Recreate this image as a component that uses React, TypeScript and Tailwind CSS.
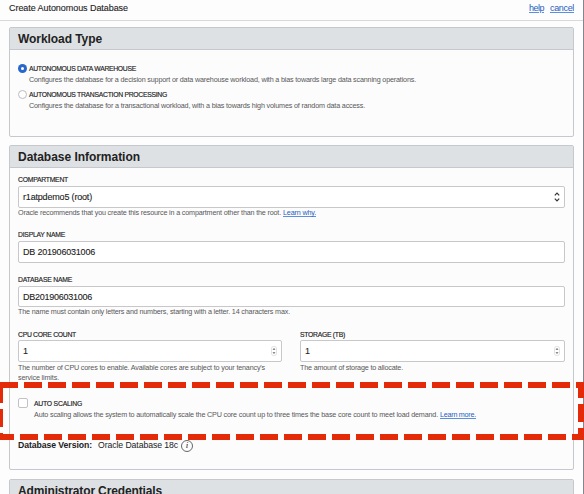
import { useLayoutEffect, useRef, type ReactNode } from "react";

/* A single line of text whose tracking is adjusted so that it spans `w` pixels. */
function Line({ w, children, className = "" }: { w: number; children: string; className?: string }) {
  const ref = useRef<HTMLSpanElement>(null);
  useLayoutEffect(() => {
    const el = ref.current;
    if (!el) return;
    el.style.letterSpacing = "0px";
    const natural = el.getBoundingClientRect().width;
    el.style.letterSpacing = `${(w - natural) / children.length}px`;
  }, [w, children]);
  return (
    <span ref={ref} className={`inline-block shrink-0 whitespace-nowrap ${className}`}>
      {children}
    </span>
  );
}

function Link({ w, children }: { w: number; children: string }) {
  return (
    <a href="#" className="block text-[#2560c4]">
      <Line w={w} className="underline decoration-[#5d8fdc] decoration-1 underline-offset-1">{children}</Line>
    </a>
  );
}

function Panel({ title, w, className, children }: { title: string; w: number; className: string; children?: ReactNode }) {
  return (
    <section className={`mx-[9px] w-[565px] shrink-0 rounded-[2px] border border-[#c5c9cd] bg-[#fcfcfd] ${className}`}>
      <h2 className="h-[22px] border-b border-[#c5c9cd] bg-[#dee1e4] pl-[8px] text-[12px] leading-[22px] font-bold text-[#222]">
        <Line w={w}>{title}</Line>
      </h2>
      {children}
    </section>
  );
}

function Label({ w, children }: { w: number; children: string }) {
  return (
    <div className="h-[10px] text-[6.8px] leading-[10px] text-[#222] [-webkit-text-stroke:0.15px_#222]">
      <Line w={w}>{children}</Line>
    </div>
  );
}

function Help({ children, className = "flex" }: { children: ReactNode; className?: string }) {
  return <div className={`gap-x-[2px] text-[7.2px] leading-[10px] text-[#585858] ${className}`}>{children}</div>;
}

function Field({ value, w, className = "h-[22px]", children }: { value: string; w: number; className?: string; children?: ReactNode }) {
  return (
    <div className={`flex items-center justify-between rounded-[2px] border border-[#c8c8ca] bg-white pl-[4px] text-[9px] leading-[20px] text-[#222] [-webkit-text-stroke:0.1px_#222] ${className}`}>
      <Line w={w}>{value}</Line>
      {children}
    </div>
  );
}

function Stepper() {
  return (
    <svg width="6" height="10" viewBox="0 0 6 10" className="mr-[4px]">
      <rect x="0.5" y="0.5" width="5" height="9" rx="2" fill="#fff" stroke="#d6d6d6" strokeWidth="0.7" />
      <path d="M1.5 3.8 3 2.1 4.5 3.8zM1.5 6.2 3 7.9 4.5 6.2z" fill="#666" />
    </svg>
  );
}

function SelectArrows() {
  return (
    <svg width="6" height="10" viewBox="0 0 6 10" fill="none" stroke="#333" strokeWidth="1.2" className="mr-[4px]">
      <path d="M0.8 3.4 3 1.2 5.2 3.4M0.8 6.6 3 8.8 5.2 6.6" />
    </svg>
  );
}

function Option({ label, lw, help, hw, checked }: { label: string; lw: number; help: string; hw: number; checked?: boolean }) {
  return (
    <div className="flex h-[26px] gap-[2px]">
      {checked ? (
        <span className="flex size-[9px] shrink-0 items-center justify-center rounded-full bg-[#2868cc]">
          <span className="size-[3px] rounded-full bg-white" />
        </span>
      ) : (
        <span className="size-[9px] shrink-0 rounded-full border border-[#bdbdc0] bg-white" />
      )}
      <div>
        <Label w={lw}>{label}</Label>
        <Help className="mt-[1px] flex">
          <Line w={hw}>{help}</Line>
        </Help>
      </div>
    </div>
  );
}

export default function App() {
  return (
    <div className="relative h-[494px] w-[584px] overflow-hidden font-['Liberation_Sans',Arial,sans-serif]">
      <main className="flex h-full flex-col overflow-hidden border-r border-[#85868b] bg-[#fdfdfd]">
        <header className="flex h-[21px] shrink-0 justify-between border-b border-[#d9d9dc] px-[9px] text-[9px] leading-[17px] text-[#222]">
          <Line w={119} className="[-webkit-text-stroke:0.1px_#222]">Create Autonomous Database</Line>
          <nav className="flex gap-[6px]">
            <Link w={15}>help</Link>
            <Link w={24}>cancel</Link>
          </nav>
        </header>

        <Panel title="Workload Type" w={84} className="mt-[6px] h-[110px]">
          <div className="flex flex-col px-[8px] pt-[14px]">
            <Option checked label="AUTONOMOUS DATA WAREHOUSE" lw={107} hw={387} help="Configures the database for a decision support or data warehouse workload, with a bias towards large data scanning operations." />
            <Option label="AUTONOMOUS TRANSACTION PROCESSING" lw={138} hw={336} help="Configures the database for a transactional workload, with a bias towards high volumes of random data access." />
          </div>
        </Panel>

        <Panel title="Database Information" w={122} className="mt-[8px] h-[325px]">
          <div className="flex flex-col px-[8px] pt-[7px]">
            <Label w={50}>COMPARTMENT</Label>
            <Field value="r1atpdemo5 (root)" w={69} className="mt-[1px] h-[22px]">
              <SelectArrows />
            </Field>
            <Help>
              <Line w={263}>Oracle recommends that you create this resource in a compartment other than the root.</Line>
              <Link w={33}>Learn why.</Link>
            </Help>

            <div className="mt-[12px]">
              <Label w={47}>DISPLAY NAME</Label>
              <Field value="DB 201906031006" w={72} className="mt-[1px] h-[22px]" />
            </div>

            <div className="mt-[12px]">
              <Label w={54}>DATABASE NAME</Label>
              <Field value="DB201906031006" w={69} className="mt-[1px] h-[21px]" />
              <Help>
                <Line w={272}>The name must contain only letters and numbers, starting with a letter. 14 characters max.</Line>
              </Help>
            </div>

            <div className="mt-[13px] grid grid-cols-[264px_265px] gap-[18px]">
              <div>
                <Label w={58}>CPU CORE COUNT</Label>
                <Field value="1" w={5}>
                  <Stepper />
                </Field>
                <Help className="mt-[1px] flex flex-col items-start">
                  <Line w={247}>The number of CPU cores to enable. Available cores are subject to your tenancy's</Line>
                  <Line w={41}>service limits.</Line>
                </Help>
              </div>
              <div>
                <Label w={45}>STORAGE (TB)</Label>
                <Field value="1" w={5}>
                  <Stepper />
                </Field>
                <Help className="mt-[1px] flex">
                  <Line w={103}>The amount of storage to allocate.</Line>
                </Help>
              </div>
            </div>

            <div className="mt-[15px] flex gap-[6px]">
              <span className="size-[10px] shrink-0 rounded-[2px] border border-[#c2c2c6] bg-white" />
              <div className="pt-[1px]">
                <Label w={48}>AUTO SCALING</Label>
                <Help className="mt-[1px] flex">
                  <Line w={404}>Auto scaling allows the system to automatically scale the CPU core count up to three times the base core count to meet load demand.</Line>
                  <Link w={36}>Learn more.</Link>
                </Help>
              </div>
            </div>

            <div className="mt-[20px] flex h-[11px] items-center text-[8.7px] leading-[11px] text-[#222]">
              <Line w={74} className="font-bold">Database Version:</Line>
              <Line w={80} className="ml-[6px]">Oracle Database 18c</Line>
              <span className="ml-[3px] flex size-[12px] shrink-0 items-center justify-center rounded-full border border-[#666] font-['Liberation_Serif',serif] text-[9px] leading-none italic">
                i
              </span>
            </div>
          </div>
        </Panel>

        <Panel title="Administrator Credentials" w={144} className="mt-[9px] h-[60px]" />
      </main>

      <svg width="584" height="494" viewBox="0 0 584 494" className="pointer-events-none absolute inset-0">
        <path d="M0 385H581V437H0Z" fill="none" stroke="#e32b0a" strokeWidth="6" strokeDasharray="18 6" />
      </svg>
    </div>
  );
}
